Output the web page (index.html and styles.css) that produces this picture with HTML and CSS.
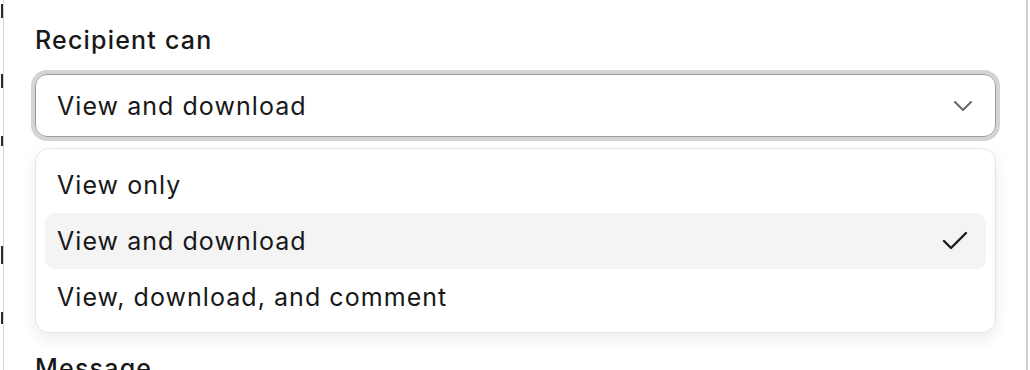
FILE: index.html
```html
<!DOCTYPE html>
<html lang="en">
<head>
  <meta charset="UTF-8" />
  <title>Share settings</title>
  <link rel="stylesheet" href="styles.css">
</head>
<body>
  <div class="page">
    <div class="behind">
      <i class="mark m1"></i>
      <i class="mark m2"></i>
      <i class="mark m3"></i>
      <i class="mark m4"></i>
      <i class="mark m5"></i>
    </div>
    <section class="panel">
      <div class="field">
        <label class="field-label">Recipient can</label>
        <div class="select">
          <span class="select-value">View and download</span>
          <svg class="chevron" width="20" height="12" viewBox="0 0 20 12">
            <path d="M2 2 L10 10 L18 2" fill="none" stroke="#666" stroke-width="2" stroke-linecap="round" stroke-linejoin="round"/>
          </svg>
        </div>
        <ul class="menu">
          <li class="menu-item">View only</li>
          <li class="menu-item selected">
            View and download
            <svg class="check" width="26" height="20" viewBox="0 0 26 20">
              <path d="M2 10 L9 17 L24 2" fill="none" stroke="#1c1c1c" stroke-width="2.4" stroke-linecap="round" stroke-linejoin="round"/>
            </svg>
          </li>
          <li class="menu-item">View, download, and comment</li>
        </ul>
      </div>
      <div class="field">
        <label class="field-label">Message</label>
      </div>
    </section>
    <div class="edge"></div>
  </div>
</body>
</html>
```

FILE: styles.css
```css
* { box-sizing: border-box; }
body {
  margin: 0;
  font-family: Inter, "Noto Sans", sans-serif;
  color: #181818;
  background: #fff;
  overflow: hidden;
}
.page { display: flex; height: 370px; }

/* bits of the page behind the sheet */
.behind { width: 3px; display: flex; flex-direction: column; align-items: flex-end; }
.mark { display: block; width: 2px; background: #2a2a2a; }
.m1 { height: 14px; margin-top: 4px; }
.m2 { height: 14px; margin-top: 56px; }
.m3 { height: 10px; margin-top: 48px; }
.m4 { height: 18px; margin-top: 100px; }
.m5 { height: 12px; margin-top: 48px; }

.panel {
  flex: 1;
  border-left: 1px solid #d2d2d2;
  padding: 24px 30px 0 31px;
}
.edge { width: 4px; border-left: 2px solid #d0d0d0; }
.field-label {
  display: block;
  font-size: 25px;
  font-weight: 500;
  letter-spacing: 1.2px;
  line-height: 32px;
  margin-bottom: 18px;
}
.select {
  height: 63px;
  border: 1px solid #9a9a9a;
  border-radius: 12px;
  box-shadow: 0 0 0 4px #d4d4d4;
  display: flex;
  align-items: center;
  justify-content: space-between;
  padding: 0 22px 0 21px;
  font-size: 25px;
  letter-spacing: 1.05px;
}
.menu {
  list-style: none;
  margin: 11px 0 19px;
  padding: 8px 9px 7px;
  border: 1px solid #e4e4e4;
  border-radius: 14px;
  box-shadow: 0 6px 16px rgba(0, 0, 0, 0.08);
}
.menu-item {
  height: 56px;
  display: flex;
  align-items: center;
  justify-content: space-between;
  padding: 0 18px 0 12px;
  border-radius: 10px;
  font-size: 25px;
  letter-spacing: 1.05px;
}
.menu-item.selected { background: #f4f4f4; }
```
